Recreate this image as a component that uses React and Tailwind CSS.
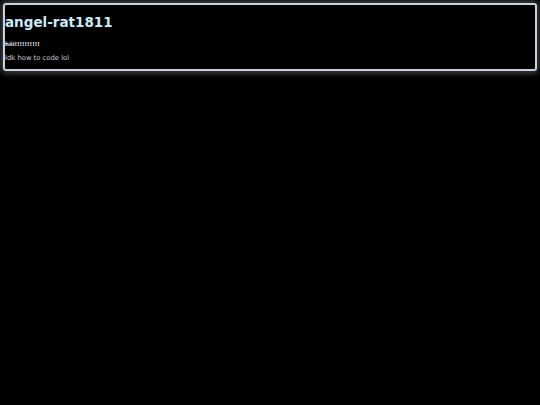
import React from 'react';

const App = () => {
  return (
    <div className="min-h-[405px] w-full bg-black p-[3px]" style={{ fontFamily: '"DejaVu Sans", sans-serif' }}>
      <div className="rounded-[3px] border-2 border-[#c9d0d8] shadow-[0_0_6px_2px_rgba(150,160,180,0.45)] h-[68px]">
        <h1 className="mt-[8px] text-[13.5px] font-bold leading-[18px] text-[#cde9f5]">angel-rat1811</h1>
        <p className="mt-[9px] text-[5.5px] font-bold leading-[8px] text-[#e0e6ec]">hiii!!!!!!!!!!</p>
        <p className="mt-[6px] text-[6.8px] leading-[9px] text-[#c8ced6]">Idk how to code lol</p>
      </div>
    </div>
  );
};

export default App;
